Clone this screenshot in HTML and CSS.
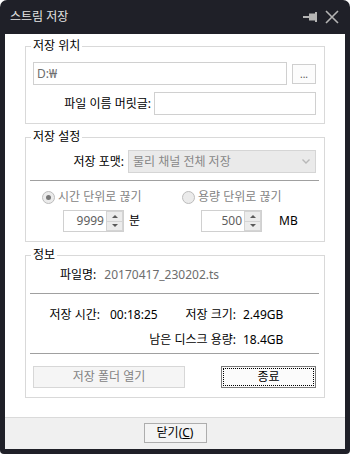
FILE: index.html
```html
<!DOCTYPE html>
<html lang="ko">
<head>
  <meta charset="UTF-8">
  <meta name="viewport" content="width=device-width, initial-scale=1.0">
  <title>스트림 저장</title>
  <link rel="stylesheet" href="styles.css">
</head>
<body>
  <div class="window">
    <div class="titlebar">
      <span class="title">스트림 저장</span>
      <div class="title-icons">
        <svg class="pin" viewBox="0 0 14 10">
          <rect x="0" y="4" width="6" height="2" fill="#b4b4b4"/>
          <rect x="6" y="1.5" width="6" height="7" fill="#b4b4b4"/>
          <rect x="12" y="0" width="2" height="10" fill="#b4b4b4"/>
        </svg>
        <svg class="close" viewBox="0 0 14 14">
          <path d="M1 1 L13 13 M13 1 L1 13" stroke="#b4b4b4" stroke-width="1.6"/>
        </svg>
      </div>
    </div>

    <div class="body">
      <fieldset class="group group-location">
        <legend>저장 위치</legend>
        <div class="path-row">
          <input class="field" type="text" value="D:₩" readonly>
          <button class="btn browse">...</button>
        </div>
        <div class="prefix-row">
          <label for="prefix">파일 이름 머릿글:</label>
          <input class="field prefix" id="prefix" type="text" value="">
        </div>
      </fieldset>

      <fieldset class="group">
        <legend>저장 설정</legend>
        <div class="format-row">
          <span>저장 포맷:</span>
          <div class="select">
            <span>물리 채널 전체 저장</span>
            <svg class="chevron" viewBox="0 0 8 5">
              <path d="M0.5 0.5 L4 4 L7.5 0.5" stroke="#b8b8b8" stroke-width="1.4" fill="none"/>
            </svg>
          </div>
        </div>
        <div class="rule"></div>
        <div class="cut-grid">
          <label class="radio"><span class="radio-dot checked"></span>시간 단위로 끊기</label>
          <label class="radio"><span class="radio-dot"></span>용량 단위로 끊기</label>
          <div class="spin-cell first">
            <div class="spin">
              <span class="spin-value">9999</span>
              <div class="spin-buttons"><span class="spin-up"></span><span class="spin-down"></span></div>
            </div>
            <span class="unit">분</span>
          </div>
          <div class="spin-cell second">
            <div class="spin">
              <span class="spin-value">500</span>
              <div class="spin-buttons"><span class="spin-up"></span><span class="spin-down"></span></div>
            </div>
            <span class="unit unit-mb">MB</span>
          </div>
        </div>
      </fieldset>

      <fieldset class="group">
        <legend>정보</legend>
        <div class="file-row">
          <span>파일명:</span>
          <span class="muted">20170417_230202.ts</span>
        </div>
        <div class="rule rule-wide"></div>
        <div class="stats">
          <span class="stat-label">저장 시간:</span>
          <span class="stat-value">00:18:25</span>
          <span class="stat-label">저장 크기:</span>
          <span class="stat-value short">2.49GB</span>
          <span class="stat-label free-label">남은 디스크 용량:</span>
          <span class="stat-value short">18.4GB</span>
        </div>
        <div class="rule rule-tight"></div>
        <div class="actions">
          <button class="btn open-btn">저장 폴더 열기</button>
          <button class="btn stop-btn">종료</button>
        </div>
      </fieldset>
    </div>

    <div class="footer">
      <button class="btn close-btn">닫기(<u>C</u>)</button>
    </div>
  </div>
</body>
</html>
```

FILE: styles.css
```css
body {
  margin: 0;
  background: #FFFFFF;
  font-family: "Noto Sans", "Noto Sans CJK KR", sans-serif;
  font-size: 12px;
  line-height: 16px;
  color: #000000;
}
.window {
  width: 350px;
  height: 454px;
  box-sizing: border-box;
  padding-bottom: 5px;
  background: #1F2028;
  border-radius: 7px 7px 4px 4px;
  display: flex;
  flex-direction: column;
}
.titlebar {
  height: 34px;
  flex: none;
  display: flex;
  align-items: center;
  padding: 0 11px 0 10px;
  color: #E4E4E4;
}
.title {
  flex: 1;
}
.title-icons {
  display: flex;
  align-items: center;
  gap: 8px;
}
.pin {
  width: 14px;
  height: 10px;
}
.close {
  width: 14px;
  height: 14px;
}
.body {
  flex: 1;
  margin: 0 5px;
  background: #FFFFFF;
  padding: 2px 20px 0;
}
.footer {
  height: 32px;
  flex: none;
  box-sizing: border-box;
  margin: 0 5px;
  background: #F0F0F0;
  border-top: 1px solid #DADADA;
  display: flex;
  justify-content: center;
  padding-top: 5px;
}

/* group boxes */
.group {
  margin: 5px 0 0;
  padding: 0 5px 9px 4px;
  border: 1px solid #D9D9D9;
  min-width: 0;
}
.group legend {
  padding: 0 2px;
  margin-left: 1px;
  line-height: 16px;
}
.group-location {
  margin-top: 2px;
  padding: 0 8px 8px 7px;
}
.group-location legend {
  margin-left: -2px;
}

/* controls */
.field {
  height: 23px;
  box-sizing: border-box;
  border: 1px solid #D0D0D0;
  padding: 0 3px;
  margin: 0;
  font: inherit;
  color: #6D6D6D;
  background: #FFFFFF;
  outline: none;
}
.btn {
  font: inherit;
  line-height: 16px;
  margin: 0;
  padding: 0;
  color: #000000;
  border: 1px solid #ADADAD;
  background: #F4F4F4;
}
.path-row {
  display: flex;
  align-items: center;
  gap: 5px;
  margin-top: 8px;
}
.path-row .field {
  flex: 1;
  min-width: 0;
}
.browse {
  width: 24px;
  height: 20px;
  border-color: #CFCFCF;
  background: #FCFCFC;
  color: #555555;
  font-size: 10px;
}
.prefix-row {
  display: flex;
  justify-content: flex-end;
  align-items: center;
  gap: 3px;
  margin-top: 7px;
}
.prefix {
  width: 162px;
}
.format-row {
  display: flex;
  justify-content: flex-end;
  align-items: center;
  gap: 4px;
  margin-top: 5px;
  padding: 0 3px;
}
.select {
  width: 188px;
  height: 23px;
  box-sizing: border-box;
  border: 1px solid #D5D5D5;
  background: #EAEAEA;
  color: #878787;
  display: flex;
  align-items: center;
  justify-content: space-between;
  padding: 0 5px 0 4px;
}
.chevron {
  width: 8px;
  height: 5px;
}
.rule {
  height: 1px;
  background: #A0A0A0;
  margin-top: 7px;
}
.rule-wide {
  margin-top: 10px;
}
.rule-tight {
  margin-top: 5px;
}

/* split options */
.cut-grid {
  display: grid;
  grid-template-columns: 140px 1fr;
  row-gap: 5px;
  margin-top: 8px;
  padding-left: 12px;
}
.radio {
  display: flex;
  align-items: center;
  gap: 3px;
  height: 16px;
  color: #838383;
}
.radio-dot {
  width: 13px;
  height: 13px;
  box-sizing: border-box;
  border: 1px solid #BCBCBC;
  border-radius: 50%;
  background: #EBEBEB;
  display: flex;
  align-items: center;
  justify-content: center;
}
.radio-dot.checked::after {
  content: "";
  width: 5px;
  height: 5px;
  border-radius: 50%;
  background: #777777;
}
.spin-cell {
  display: flex;
  align-items: center;
}
.spin-cell.first {
  margin-left: 21px;
}
.spin-cell.second {
  margin-left: 19px;
}
.spin {
  width: 61px;
  height: 22px;
  box-sizing: border-box;
  border: 1px solid #D0D0D0;
  background: #FFFFFF;
  display: flex;
}
.spin-value {
  flex: 1;
  text-align: right;
  padding-right: 2px;
  line-height: 20px;
  color: #5E5E5E;
}
.spin-buttons {
  width: 17px;
  display: flex;
  flex-direction: column;
}
.spin-up,
.spin-down {
  flex: 1;
  box-sizing: border-box;
  border: 1px solid #D4D4D4;
  background: #ECECEC;
  display: flex;
  align-items: center;
  justify-content: center;
}
.spin-down {
  border-top: none;
}
.spin-up::after {
  content: "";
  border-left: 3px solid transparent;
  border-right: 3px solid transparent;
  border-bottom: 3px solid #5A5A5A;
}
.spin-down::after {
  content: "";
  border-left: 3px solid transparent;
  border-right: 3px solid transparent;
  border-top: 3px solid #5A5A5A;
}
.unit {
  margin-left: 5px;
}
.unit-mb {
  margin-left: 17px;
}

/* info */
.file-row {
  display: flex;
  gap: 8px;
  margin-top: 4px;
  padding-left: 30px;
}
.muted {
  color: #6D6D6D;
}
.stats {
  display: grid;
  grid-template-columns: 70px 70px 66px 1fr;
  row-gap: 9px;
  margin-top: 13px;
}
.stat-label {
  text-align: right;
  white-space: nowrap;
}
.stat-value {
  padding-left: 10px;
}
.stat-value.short {
  padding-left: 7px;
}
.free-label {
  grid-column: 1 / 4;
}
.actions {
  display: flex;
  justify-content: space-between;
  margin-top: 12px;
  padding: 0 3px;
}
.open-btn {
  width: 152px;
  height: 22px;
  color: #838383;
  border-color: #D7D7D7;
  background: #F5F5F5;
}
.stop-btn {
  width: 95px;
  height: 22px;
  border-color: #7A7A7A;
  background: #FBFBFB;
  outline: 1px dotted #000000;
  outline-offset: -3px;
}
.close-btn {
  width: 63px;
  height: 20px;
}
```
